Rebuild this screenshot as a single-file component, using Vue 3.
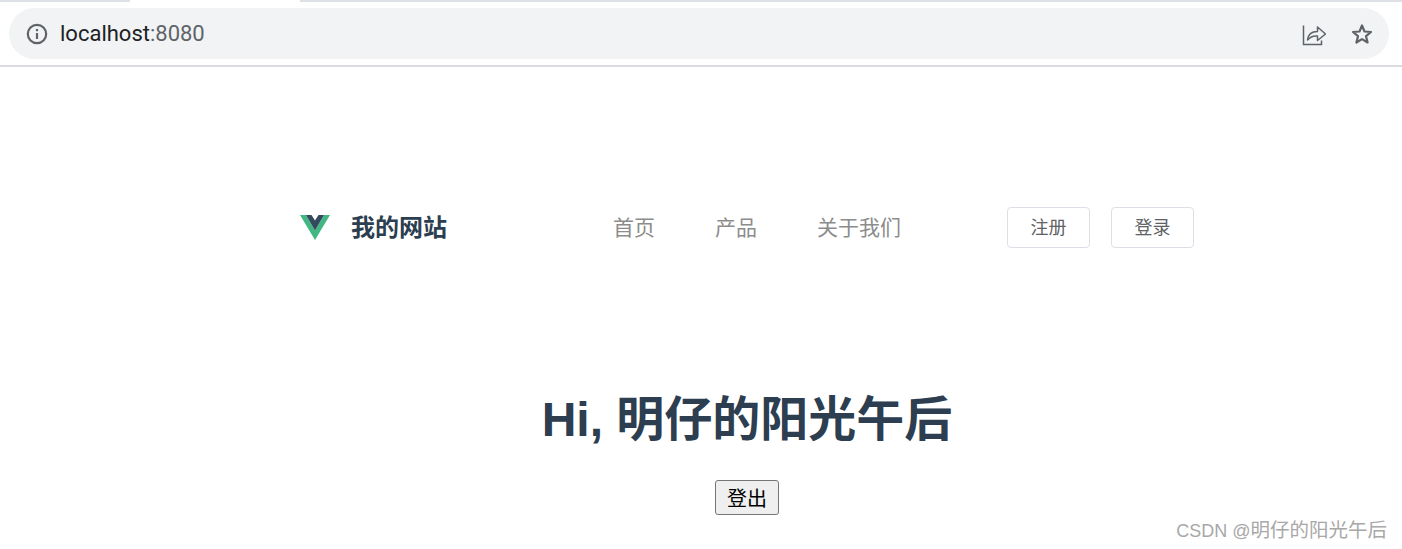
<template>
  <div class="page">
    <div class="browser-bar">
      <div class="tab-strip">
        <span class="tab-line tab-left"></span>
        <span class="tab-gap"></span>
        <span class="tab-line tab-right"></span>
      </div>
      <div class="address">
        <svg class="info-icon" width="22" height="22" viewBox="0 0 22 22">
          <circle cx="11" cy="11" r="9.200" fill="none" stroke="#5f6368" stroke-width="2.200" />
          <rect x="9.900" y="10" width="2.200" height="6" fill="#5f6368" />
          <rect x="9.900" y="6" width="2.200" height="2.200" fill="#5f6368" />
        </svg>
        <span class="url">localhost<span class="port">:8080</span></span>
        <svg class="share-icon" width="24" height="24" viewBox="0 0 24 24" fill="none" stroke="#5f6368" stroke-width="1.500">
          <path d="M1.500 3.500v19h18v-4" />
          <path d="M5.500 18c.5-5 4-8.500 10-8.500V5l8 7-8 6.500V14c-4.500-.5-7.500 1-10 4z" stroke-linejoin="round" />
        </svg>
        <svg class="star-icon" width="22" height="22" viewBox="0 0 22 22" fill="none" stroke="#5f6368" stroke-width="2.200">
          <path d="M11 2.500l2.500 6 6.500.5-5 4.200 1.600 6.300L11 16.100l-5.600 3.400L7 13.200 2 9l6.500-.5z" stroke-linejoin="round" />
        </svg>
      </div>
    </div>

    <div class="content">
      <header class="nav">
        <div class="brand">
          <svg class="logo" width="30" height="25" viewBox="0 0 30 25">
            <path d="M0 0h6l9 15.500L24 0h6L15 25z" fill="#41b883" />
            <path d="M6 0h5.500L15 5.500 18.500 0H24l-9 15.500z" fill="#35495e" />
          </svg>
          <span class="brand-name">我的网站</span>
        </div>
        <nav class="links">
          <a v-for="link in links" :key="link" class="link">{{ link }}</a>
        </nav>
        <div class="actions">
          <button class="nav-btn">注册</button>
          <button class="nav-btn">登录</button>
        </div>
      </header>

      <main class="hero">
        <h1 class="greeting">Hi, 明仔的阳光午后</h1>
        <button class="logout">登出</button>
      </main>
    </div>

    <div class="watermark">CSDN @<span class="watermark-name">明仔的阳光午后</span></div>
  </div>
</template>

<script setup>
const links = ['首页', '产品', '关于我们']
</script>

<style>
html,
body {
  margin: 0;
  background: #fff;
}
</style>

<style scoped>
.page {
  position: relative;
  width: 1402px;
  height: 549px;
  overflow: hidden;
  font-family: "Liberation Sans", "Noto Sans CJK SC", sans-serif;
}

.browser-bar {
  height: 65px;
  border-bottom: 2px solid #dadce0;
}

.tab-strip {
  display: flex;
  height: 2px;
  margin-bottom: 6px;
}

.tab-line {
  height: 2px;
  background: #dee1e6;
}

.tab-left {
  width: 130px;
}

.tab-gap {
  width: 170px;
}

.tab-right {
  flex: 1;
}

.address {
  display: flex;
  align-items: center;
  height: 51px;
  margin: 0 13px 0 9px;
  padding: 0 16px 0 17px;
  border-radius: 26px;
  background: #f1f3f4;
}

.url {
  margin-left: 12px;
  font-family: "Roboto", "Liberation Sans", sans-serif;
  font-size: 22px;
  color: #202124;
}

.port {
  color: #5f6368;
}

.share-icon {
  margin-left: auto;
}

.star-icon {
  margin-left: 25px;
}

.content {
  width: 894px;
  margin-left: 300px;
}

.nav {
  display: flex;
  align-items: center;
  height: 41px;
  margin-top: 140px;
}

.brand {
  display: flex;
  align-items: center;
  width: 313px;
}

.logo {
  margin-right: 21px;
  margin-bottom: 1px;
}

.brand-name {
  margin-bottom: 4px;
  font-size: 24px;
  font-weight: 700;
  color: #2c3e50;
}

.links {
  display: flex;
  gap: 60px;
  margin-bottom: 4px;
}

.link {
  font-size: 21px;
  color: #8c8c8c;
}

.actions {
  display: flex;
  gap: 21px;
  margin-left: auto;
}

.nav-btn {
  width: 83px;
  height: 41px;
  padding: 0 0 4px;
  border: 1px solid #dcdfe6;
  border-radius: 4px;
  background: #fff;
  font-family: inherit;
  font-size: 18px;
  color: #606266;
}

.hero {
  display: flex;
  flex-direction: column;
  align-items: center;
}

.greeting {
  margin: 142px 0 0;
  font-size: 48px;
  line-height: 60px;
  font-weight: 700;
  color: #2c3e50;
}

.logout {
  width: 64px;
  height: 35px;
  margin-top: 30px;
  padding: 0;
  border: 1px solid #767676;
  border-radius: 3px;
  background: #efefef;
  font-family: inherit;
  font-size: 20px;
  color: #000;
}

.watermark {
  position: absolute;
  right: 15px;
  top: 518px;
  font-size: 18px;
  line-height: 24px;
  color: #a8a8a8;
}

.watermark-name {
  font-size: 19.500px;
}
</style>
